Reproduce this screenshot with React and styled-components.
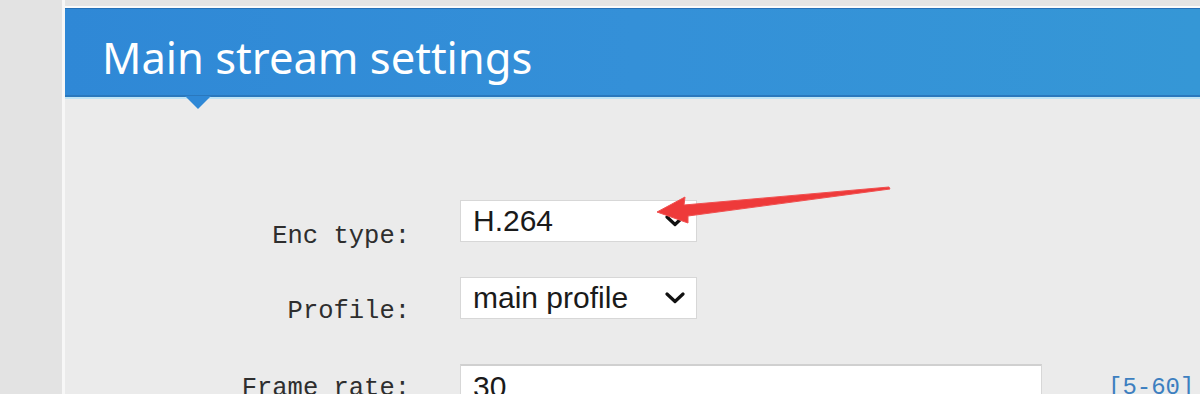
import React from "react";
import styled, { createGlobalStyle } from "styled-components";

const GlobalStyle = createGlobalStyle`
  html, body {
    margin: 0;
    padding: 0;
    background: #e4e4e4;
    overflow: hidden;
  }
`;

const FIELDS = [
  { id: "enc", label: "Enc type:", kind: "select", value: "H.264", shift: 15, gap: 0 },
  { id: "profile", label: "Profile:", kind: "select", value: "main profile", shift: 13, gap: 35 },
  { id: "fps", label: "Frame rate:", kind: "input", value: "30", shift: 3, gap: 45, hint: "[5-60]" },
];

const Chevron = () => (
  <svg width="22" height="12" viewBox="0 0 22 12">
    <path d="M3 2 L11 9.5 L19 2" fill="none" stroke="#111" strokeWidth="3.2" strokeLinecap="round" strokeLinejoin="round" />
  </svg>
);

const RedArrow = () => (
  <ArrowLayer width="250" height="60" viewBox="0 0 250 60">
    <path
      d="M6 32 L34 17 L33 25 L238 7 L239 9 L37 36 L37 43 Z"
      fill="#ee3a3a"
      stroke="#f05050"
      strokeWidth="1"
      strokeLinejoin="round"
    />
  </ArrowLayer>
);

const App = () => {
  return (
    <>
      <GlobalStyle />
      <Page>
        <SideStrip />
        <Panel>
          <Header>
            <Title>Main stream settings</Title>
          </Header>
          <Form>
            {FIELDS.map((f) => (
              <Row key={f.id} $gap={f.gap}>
                <Label $shift={f.shift}>{f.label}</Label>
                {f.kind === "select" ? (
                  <SelectBox>
                    <span>{f.value}</span>
                    <Chevron />
                  </SelectBox>
                ) : (
                  <InputBox>{f.value}</InputBox>
                )}
                {f.hint && <Hint>{f.hint}</Hint>}
              </Row>
            ))}
          </Form>
          <RedArrow />
        </Panel>
      </Page>
    </>
  );
};

const Page = styled.div`
  display: flex;
  width: 1200px;
  height: 394px;
  overflow: hidden;
`;

const SideStrip = styled.div`
  width: 62px;
  flex-shrink: 0;
  background: #e3e3e3;
  border-right: 3px solid #f7f7f7;
`;

const Panel = styled.div`
  position: relative;
  flex: 1;
  display: flex;
  flex-direction: column;
  margin-top: 6px;
  border-top: 2px solid #fafafa;
  background: #ebebeb;
`;

const Header = styled.div`
  position: relative;
  flex-shrink: 0;
  height: 86px;
  display: flex;
  align-items: center;
  padding-left: 37px;
  background: linear-gradient(90deg, #2f88d6 0%, #3490d8 50%, #3597d6 100%);
  border-top: 1px solid #2470b8;
  border-bottom: 2px solid #2a78bd;
  box-shadow: 0 2px 0 #bfe4f5;

  &::after {
    content: "";
    position: absolute;
    left: 120px;
    bottom: -14px;
    border-left: 13px solid transparent;
    border-right: 13px solid transparent;
    border-top: 13px solid #2f88d6;
  }
`;

const Title = styled.h1`
  margin: 0;
  padding-top: 9px;
  font-family: "Noto Sans", "Open Sans", sans-serif;
  font-weight: 400;
  font-size: 43.5px;
  letter-spacing: 0;
  color: #ffffff;
`;

const Form = styled.div`
  flex-shrink: 0;
  display: flex;
  flex-direction: column;
  padding-top: 103px;
`;

const Row = styled.div`
  display: grid;
  grid-template-columns: 345px 582px 1fr;
  column-gap: 50px;
  align-items: start;
  margin-top: ${(p) => p.$gap}px;
`;

const Label = styled.div`
  grid-column: 1;
  box-sizing: border-box;
  height: 42px;
  padding-top: ${(p) => p.$shift * 2}px;
  display: flex;
  align-items: center;
  justify-content: flex-end;
  font-family: "Liberation Mono", "Courier New", monospace;
  font-size: 25.5px;
  color: #2e2e2e;
  white-space: nowrap;
`;

const SelectBox = styled.div`
  grid-column: 2;
  width: 237px;
  height: 42px;
  box-sizing: border-box;
  display: flex;
  align-items: center;
  justify-content: space-between;
  padding: 0 10px 0 12px;
  background: #ffffff;
  border: 1px solid #d7d7d7;
  font-family: "Liberation Sans", Arial, sans-serif;
  font-size: 30px;
  color: #1a1a1a;
`;

const InputBox = styled.div`
  grid-column: 2;
  height: 44px;
  box-sizing: border-box;
  display: flex;
  align-items: center;
  padding: 0 12px;
  background: #ffffff;
  border: 1px solid #d7d7d7;
  border-top: 2px solid #d0d0d0;
  font-family: "Liberation Sans", Arial, sans-serif;
  font-size: 30px;
  color: #1a1a1a;
`;

const Hint = styled.div`
  grid-column: 3;
  padding-top: 10px;
  padding-left: 16px;
  font-family: "Liberation Mono", "Courier New", monospace;
  font-size: 24px;
  color: #3d7fc0;
  white-space: nowrap;
`;

const ArrowLayer = styled.svg`
  position: absolute;
  left: 586px;
  top: 172px;
  pointer-events: none;
`;

export default App;
